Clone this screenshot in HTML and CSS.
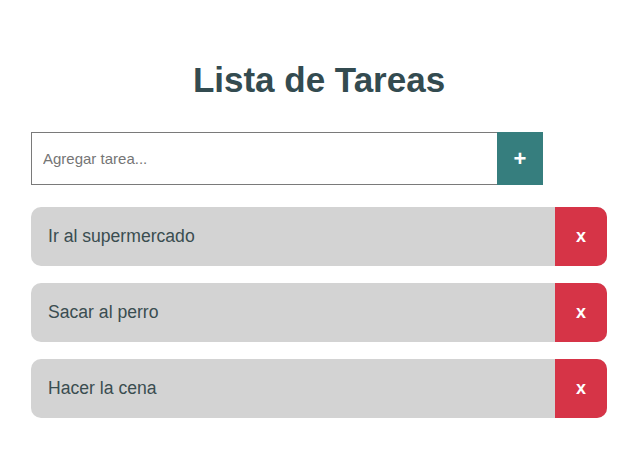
FILE: index.html
```html
<!DOCTYPE html>
<html lang="es">
<head>
<meta charset="utf-8">
<title>Lista de Tareas</title>
<link rel="stylesheet" href="styles.css">
</head>
<body>
<main class="app">
  <h1 class="title">Lista de Tareas</h1>
  <form class="add-form">
    <input class="add-input" type="text" placeholder="Agregar tarea...">
    <button class="add-btn" type="button">+</button>
  </form>
  <ul class="tasks">
    <li class="task"><span class="task-text">Ir al supermercado</span><button class="del-btn" type="button">x</button></li>
    <li class="task"><span class="task-text">Sacar al perro</span><button class="del-btn" type="button">x</button></li>
    <li class="task"><span class="task-text">Hacer la cena</span><button class="del-btn" type="button">x</button></li>
  </ul>
</main>
</body>
</html>
```
FILE: styles.css
```css
* { box-sizing: border-box; }
html, body { margin: 0; padding: 0; background: #fff; }
body { font-family: "Liberation Sans", Arial, sans-serif; color: #334b50; }
.app {
  width: 576px;
  margin: 0 auto;
  padding-top: 60px;
}
.title {
  margin: 0 0 32px;
  text-align: center;
  font-size: 35px;
  font-weight: bold;
  line-height: 40px;
  color: #334b50;
}
.add-form {
  display: flex;
  margin: 0 0 22px;
}
.add-input {
  width: 466px;
  height: 53px;
  border: 1px solid #7a7a7a;
  border-right: none;
  padding: 0 11px;
  font-family: "Liberation Sans", Arial, sans-serif;
  font-size: 15px;
  color: #333;
  outline: none;
}
.add-input::placeholder { color: #757575; }
.add-btn {
  width: 46px;
  height: 53px;
  border: none;
  background: #367e7e;
  color: #fff;
  font-family: "Liberation Sans", Arial, sans-serif;
  font-size: 22px;
  font-weight: bold;
  padding: 0;
}
.tasks {
  list-style: none;
  margin: 0;
  padding: 0;
  display: flex;
  flex-direction: column;
  gap: 17px;
}
.task {
  display: flex;
  align-items: stretch;
  height: 59px;
  background: #d3d3d3;
  border-radius: 10px;
  overflow: hidden;
}
.task-text {
  flex: 1;
  display: flex;
  align-items: center;
  padding-left: 17px;
  font-size: 17.6px;
  color: #3a4d50;
}
.del-btn {
  width: 52px;
  border: none;
  background: #d63447;
  color: #fff;
  font-family: "Liberation Sans", Arial, sans-serif;
  font-size: 18px;
  font-weight: bold;
  padding: 0;
}
```
